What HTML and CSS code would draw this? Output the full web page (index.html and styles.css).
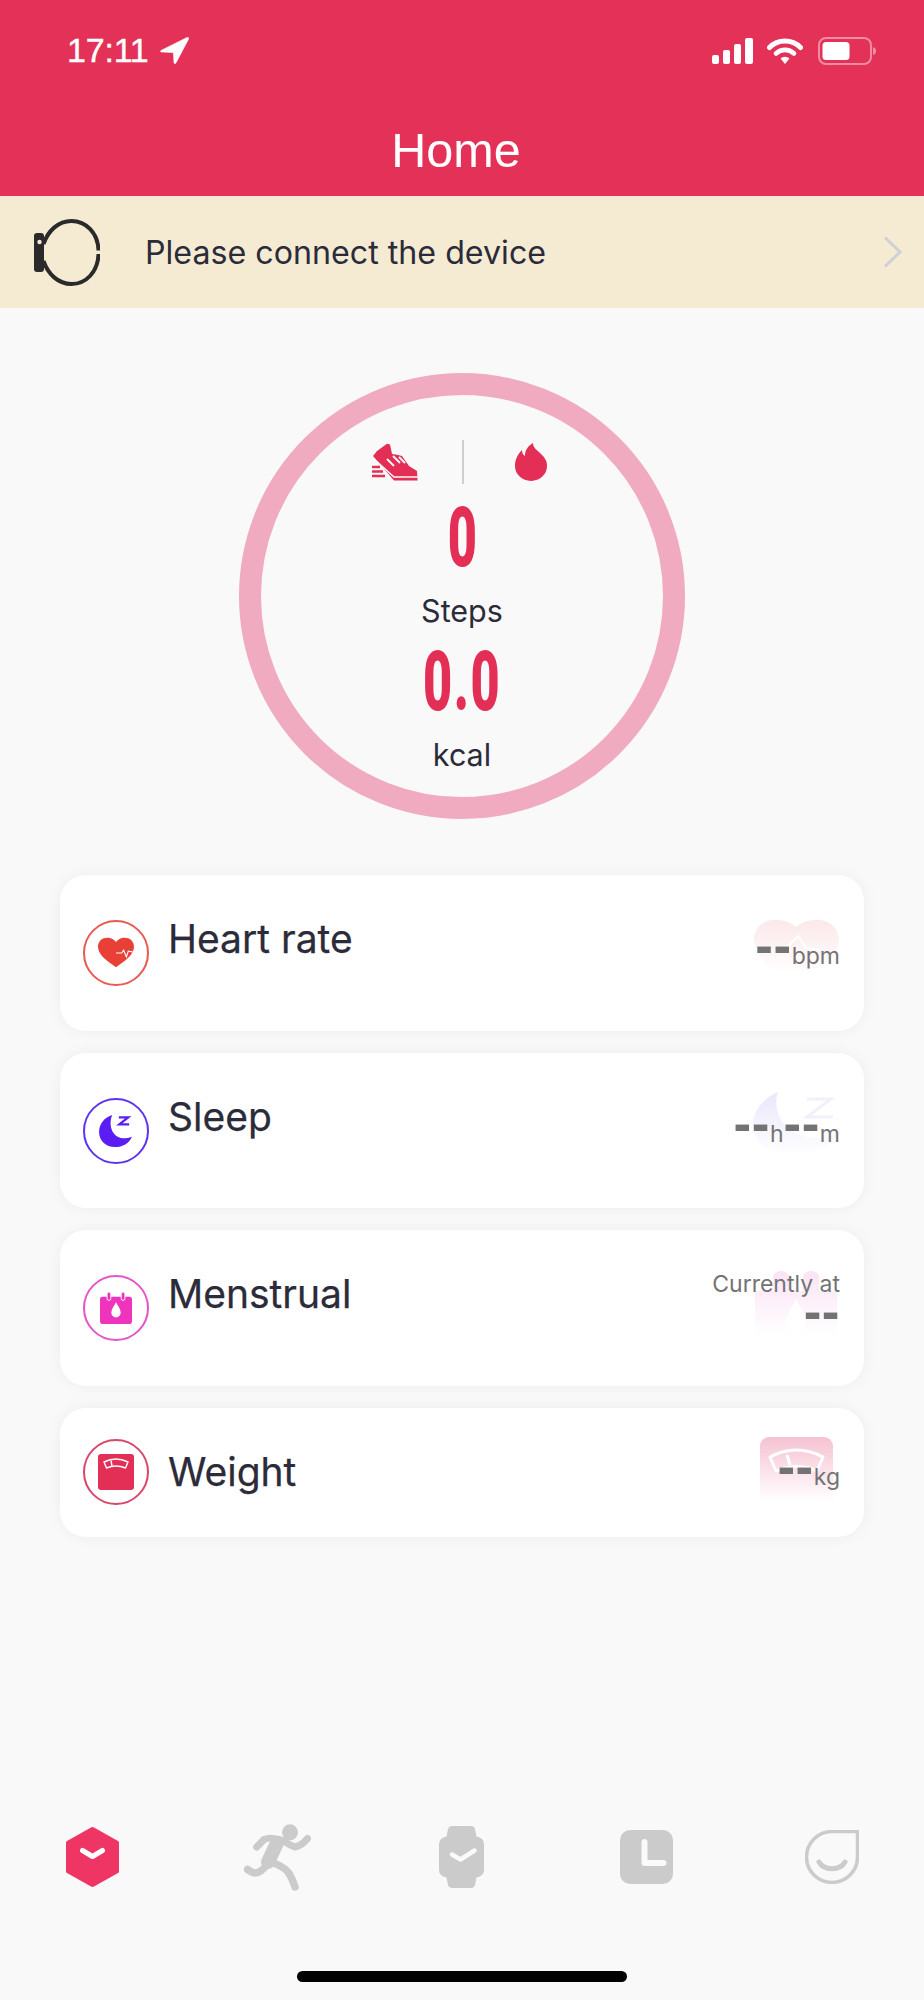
FILE: index.html
```html
<!DOCTYPE html>
<html lang="en">

<head>
    <meta charset="UTF-8">
    <meta name="viewport" content="width=device-width, initial-scale=1.0">
    <title>Home</title>
    <link rel="stylesheet" href="styles.css">
</head>

<body>
    <div class="app">
        <header class="top">
            <div class="status">
                <div class="status-left">
                    <span class="clock">17:11</span>
                    <svg class="ico-arrow" viewBox="0 0 29 27"><path d="M27 .5 1 13.500q-1.500 1 .3 1.500l12 .5 .7 10.500q.8 1.500 1.800.2L28.600 2q.3-2-1.600-1.500z" fill="#fff" stroke="#fff" stroke-width=".6" stroke-linejoin="round"/></svg>
                </div>
                <div class="status-right">
                    <svg class="ico-signal" viewBox="0 0 41 26">
                        <rect x="0" y="17" width="7" height="9" rx="2" fill="#fff"/>
                        <rect x="11" y="12" width="7" height="14" rx="2" fill="#fff"/>
                        <rect x="22" y="6" width="7" height="20" rx="2" fill="#fff"/>
                        <rect x="33" y="0" width="8" height="26" rx="2" fill="#fff"/>
                    </svg>
                    <svg class="ico-wifi" viewBox="0 0 36 26">
                        <path d="M2.500 9.500a22 22 0 0 1 31 0" fill="none" stroke="#fff" stroke-width="5" stroke-linecap="round"/>
                        <path d="M9 15.500a13 13 0 0 1 18 0" fill="none" stroke="#fff" stroke-width="4.600" stroke-linecap="round"/>
                        <path d="M13.500 20.500 18 26l4.500-5.500a6.500 6.500 0 0 0-9 0z" fill="#fff"/>
                    </svg>
                    <svg class="ico-battery" viewBox="0 0 58 28">
                        <rect x="1" y="1" width="52" height="26" rx="7" fill="none" stroke="#fff" stroke-opacity=".45" stroke-width="2"/>
                        <rect x="4.500" y="5" width="27" height="18" rx="3.500" fill="#fff"/>
                        <path d="M55 10q3 1 3 4t-3 4z" fill="#fff" fill-opacity=".45"/>
                    </svg>
                </div>
            </div>
            <h1 class="top-title">Home</h1>
        </header>

        <div class="connect">
            <svg class="ico-band" viewBox="0 0 66 67">
                <path d="M64.500 31.500C64 14 52 2 37.500 2 24 2 14 12 9.500 25" fill="none" stroke="#2b2a2a" stroke-width="4"/>
                <path d="M64.500 35C64 53 52 65 37.500 65 24 65 14 55 9.500 42" fill="none" stroke="#2b2a2a" stroke-width="4"/>
                <rect x="0" y="14" width="10" height="39" rx="3" fill="#2b2a2a"/>
                <circle cx="5.500" cy="23" r="2.200" fill="#f5ebd3"/>
            </svg>
            <span class="connect-text">Please connect the device</span>
            <svg class="ico-chevron" viewBox="0 0 19 32"><path d="M2 1.500 17 16 2 30.500" fill="none" stroke="#cfd1d6" stroke-width="3"/></svg>
        </div>

        <section class="ring-wrap">
            <div class="ring">
                <div class="ring-icons">
                    <div class="ring-cell">
                        <svg class="ico-shoe" viewBox="0 0 46 38">
                            <path d="M15 .700 18 1.500 20 11q5 .5 10 2l7 10 8 5 .6 9.500H22L1 13l4-5z" fill="#e32e55"/>
                            <path d="M15 16l7 7M21 13l7 7M27 14l6 6" fill="none" stroke="#fafafa" stroke-width="1.800"/>
                            <path d="M2 16l20 18h24" fill="none" stroke="#fafafa" stroke-width="1.400"/>
                            <path d="M0 24h8M0 28.500h11M0 33h13" fill="none" stroke="#e32e55" stroke-width="2.600"/>
                        </svg>
                    </div>
                    <div class="ring-cell ring-cell-line">
                        <svg class="ico-flame" viewBox="0 0 32 38"><path d="M18 0c0 5 4 7 8 11 4 4 6 7 6 12a16 15 0 0 1-32 0C0 16 3 11 7 7c0 3 1 5 3 6 0-6 3-10 8-13z" fill="#e32e55"/></svg>
                    </div>
                </div>
                <div class="big-num big-num-steps"><span>0</span></div>
                <div class="ring-label">Steps</div>
                <div class="big-num big-num-kcal"><span>0.0</span></div>
                <div class="ring-label ring-label-kcal">kcal</div>
            </div>
        </section>

        <section class="cards">
            <div class="card card-heart">
                <svg class="card-art art-heart" viewBox="0 0 85 54">
                    <defs>
                        <linearGradient id="fadeHeart" x1="0" y1="0" x2="0" y2="1">
                            <stop offset="0" stop-color="#fce8ea"/>
                            <stop offset="1" stop-color="#fff"/>
                        </linearGradient>
                    </defs>
                    <path d="M42 7C36 1 28 0 20 0 8 0 0 9 0 20c0 14 12 24 22 34h40c10-10 23-20 23-34C85 9 76 0 64 0 56 0 48 1 42 7z" fill="url(#fadeHeart)"/>
                    <path d="M30 30l14-14 8 12 14 2" fill="none" stroke="#fff" stroke-width="2"/>
                </svg>
                <div class="card-badge badge-heart">
                    <svg class="badge-ico" viewBox="0 0 38 32">
                        <path d="M19 31C12 26 0 19 0 9.500 0 3.500 4.500 0 10 0c4 0 7 2 9 4.500C21 2 24 0 28 0c5.500 0 10 3.500 10 9.500C38 19 26 26 19 31z" fill="#e83f36"/>
                        <path d="M19 16h6l2-3 3 7 2-6 5 1" fill="none" stroke="#fff" stroke-width="1.200"/>
                    </svg>
                </div>
                <div class="card-title">Heart rate</div>
                <div class="card-value"><span class="dash">--</span><span class="unit">bpm</span></div>
            </div>

            <div class="card card-sleep">
                <svg class="card-art art-moon" viewBox="0 0 87 64">
                    <defs>
                        <linearGradient id="fadeMoon" x1="0" y1="0" x2="0" y2="1">
                            <stop offset="0" stop-color="#e9e7fb"/>
                            <stop offset="1" stop-color="#fff"/>
                        </linearGradient>
                    </defs>
                    <path d="M25 0C10 6 0 19 0 33c0 18 18 31 40 31 20 0 36-8 47-24-14 8-34 8-47 0C26 31 20 14 25 0z" fill="url(#fadeMoon)"/>
                    <path d="M54 7h24L54 25h26" fill="none" stroke="#f1f0fb" stroke-width="3"/>
                </svg>
                <div class="card-badge badge-sleep">
                    <svg class="badge-ico" viewBox="0 0 36 34">
                        <path d="M14 0C5 3 0 10 0 18c0 9 7 16 17 16 8 0 15-4 18-11-9 3-15 2-19-3C12 15 11 7 14 0z" fill="#5a1ef5"/>
                        <path d="M21 2.500h10L21.500 10H32" fill="none" stroke="#5a1ef5" stroke-width="2.400"/>
                    </svg>
                </div>
                <div class="card-title">Sleep</div>
                <div class="card-value"><span class="dash">--</span><span class="unit">h</span><span class="dash">--</span><span class="unit">m</span></div>
            </div>

            <div class="card card-cycle">
                <svg class="card-art art-cal" viewBox="0 0 82 64">
                    <defs>
                        <linearGradient id="fadeCal" x1="0" y1="0" x2="0" y2="1">
                            <stop offset="0" stop-color="#fae3f5"/>
                            <stop offset="1" stop-color="#fff"/>
                        </linearGradient>
                    </defs>
                    <path d="M0 20h18V6a8 6 0 0 1 16 0v14h14V6a8 6 0 0 1 16 0v14h18v44H0z" fill="url(#fadeCal)"/>
                    <path d="M41 28 30 50a11 11 0 0 0 22 0z" fill="#fff"/>
                </svg>
                <div class="card-badge badge-cycle">
                    <svg class="badge-ico" viewBox="0 0 34 34">
                        <path d="M3 5h5V2h3v3h12V2h3v3h5a3 3 0 0 1 3 3v23a3 3 0 0 1-3 3H3a3 3 0 0 1-3-3V8a3 3 0 0 1 3-3z" fill="#ee33bd"/>
                        <path d="M9.500 0a2 2 0 0 1 2 2v5a2 2 0 0 1-4 0V2a2 2 0 0 1 2-2zM24.500 0a2 2 0 0 1 2 2v5a2 2 0 0 1-4 0V2a2 2 0 0 1 2-2z" fill="#ee33bd" stroke="#fff" stroke-width="1"/>
                        <path d="M17 11c-2 4-5 7-5 11a5 5 0 0 0 10 0c0-4-3-7-5-11z" fill="#fff"/>
                    </svg>
                </div>
                <div class="card-title">Menstrual</div>
                <div class="card-value card-value-stack">
                    <span class="unit">Currently at</span>
                    <span class="dash">--</span>
                </div>
            </div>

            <div class="card card-weight">
                <svg class="card-art art-scale" viewBox="0 0 73 64">
                    <defs>
                        <linearGradient id="fadeScale" x1="0" y1="0" x2="0" y2="1">
                            <stop offset="0" stop-color="#f6c2d2"/>
                            <stop offset="1" stop-color="#fff"/>
                        </linearGradient>
                    </defs>
                    <path d="M9 0h55a9 9 0 0 1 9 9v55H0V9a9 9 0 0 1 9-9z" fill="url(#fadeScale)"/>
                    <path d="M10 20q26-14 53 0l-6 14q-19-9-41 0z" fill="none" stroke="#fff" stroke-width="3" stroke-linejoin="round"/>
                    <path d="M27 18l3 10" fill="none" stroke="#fff" stroke-width="3"/>
                </svg>
                <div class="card-badge badge-weight">
                    <svg class="badge-ico badge-ico-scale" viewBox="0 0 36 36">
                        <rect width="36" height="36" rx="3" fill="#e32e55"/>
                        <path d="M6 8q12-6 24 0l-2.500 6q-9.500-4-19 0z" fill="none" stroke="#fff" stroke-width="1.400" stroke-linejoin="round"/>
                        <path d="M13 6.500l1 5.500" fill="none" stroke="#fff" stroke-width="1.400"/>
                    </svg>
                </div>
                <div class="card-title">Weight</div>
                <div class="card-value"><span class="dash">--</span><span class="unit">kg</span></div>
            </div>
        </section>

        <nav class="tabs">
            <div class="tab">
                <svg class="ico-hex" viewBox="0 0 53 60">
                    <path d="M25 .5q1.500-.8 3 0l24 13.500q1 .5 1 1.500v29q0 1-1 1.500L28 59.500q-1.500.8-3 0L1 46q-1-.5-1-1.500v-29q0-1 1-1.500z" fill="#ee3564"/>
                    <path d="M16.500 23.500l10 6 10-6" fill="none" stroke="#fff" stroke-width="5" stroke-linecap="round" stroke-linejoin="round"/>
                </svg>
            </div>
            <div class="tab">
                <svg class="ico-run" viewBox="0 0 67 67">
                    <circle cx="46" cy="8.300" r="8" fill="#cbcbcb"/>
                    <path d="M12.700 23 20 15.500c6-3 13-1 19 1 3 1.500 6 5 12 6.500 5-1 9-4 12.500-8.500" fill="none" stroke="#cbcbcb" stroke-width="7" stroke-linecap="round" stroke-linejoin="round"/>
                    <path d="M33 19 24 38" fill="none" stroke="#cbcbcb" stroke-width="14" stroke-linecap="round"/>
                    <path d="M24 39c-4 6-8 10-13 10-3 0-5-2-7.500-3.500" fill="none" stroke="#cbcbcb" stroke-width="7.500" stroke-linecap="round" stroke-linejoin="round"/>
                    <path d="M26 38c7 2 14 5 18 10 3 4 5 9 7 15" fill="none" stroke="#cbcbcb" stroke-width="7.500" stroke-linecap="round" stroke-linejoin="round"/>
                </svg>
            </div>
            <div class="tab">
                <svg class="ico-watch" viewBox="0 0 45 62">
                    <path d="M13 0h19q3 0 4 3l1.500 7.500Q45 12 45 18v26q0 6-7.500 7.500L36 59q-1 3-4 3H13q-3 0-4-3L7.500 51.500Q0 50 0 44V18q0-6 7.500-7.500L9 3q1-3 4-3z" fill="#cbcbcb"/>
                    <path d="M13 28.500l8.500 5 14-9" fill="none" stroke="#fafafa" stroke-width="4.500" stroke-linecap="round" stroke-linejoin="round"/>
                </svg>
            </div>
            <div class="tab">
                <svg class="ico-clock" viewBox="0 0 53 54">
                    <rect width="53" height="54" rx="10" fill="#cbcbcb"/>
                    <path d="M24.500 12v21h19" fill="none" stroke="#fafafa" stroke-width="6" stroke-linecap="round" stroke-linejoin="round"/>
                </svg>
            </div>
            <div class="tab">
                <svg class="ico-drop" viewBox="0 0 54 54">
                    <path d="M52.500 1.500V27A25.500 25.500 0 1 1 27 1.500z" fill="none" stroke="#cbcbcb" stroke-width="3.500"/>
                    <path d="M14 32c5 9 21 9 26 0" fill="none" stroke="#cbcbcb" stroke-width="5" stroke-linecap="round"/>
                </svg>
            </div>
        </nav>
        <div class="home-bar"></div>
    </div>
</body>

</html>
```

FILE: styles.css
```css
* {
    box-sizing: border-box;
}

body {
    margin: 0;
    font-family: Inter, "Liberation Sans", sans-serif;
    color: #2b2b3a;
    background-color: #f9f9f9;
}

svg {
    display: block;
    flex: none;
}

.app {
    display: flex;
    flex-direction: column;
    height: 2000px;
    overflow: hidden;
}

/* red header */
.top {
    height: 196px;
    padding-top: 36px;
    color: #fff;
    background-color: #e33157;
}

.status {
    display: flex;
    align-items: center;
    justify-content: space-between;
    height: 29px;
    padding: 0 48px 0 67px;
}

.status-left,
.status-right {
    display: flex;
    align-items: center;
}

.clock {
    font-family: "Liberation Sans", sans-serif;
    font-size: 34px;
    letter-spacing: -.2px;
    -webkit-text-stroke: .4px #fff;
}

.ico-arrow {
    width: 29px;
    height: 27px;
    margin-left: 11px;
}

.ico-signal {
    width: 41px;
    height: 26px;
}

.ico-wifi {
    width: 36px;
    height: 26px;
    margin-left: 14px;
}

.ico-battery {
    width: 58px;
    height: 28px;
    margin-left: 15px;
}

.top-title {
    margin: 57px 0 0;
    padding-right: 12px;
    font-family: "Liberation Sans", sans-serif;
    font-size: 48.5px;
    font-weight: 400;
    line-height: 56px;
    text-align: center;
}

/* connect banner */
.connect {
    display: flex;
    align-items: center;
    height: 112px;
    padding: 0 22px 0 34px;
    background-color: #f5ebd3;
}

.ico-band {
    width: 66px;
    height: 67px;
}

.connect-text {
    margin-left: 45px;
    font-size: 32.2px;
}

.ico-chevron {
    width: 19px;
    height: 32px;
    margin-left: auto;
}

/* step ring */
.ring-wrap {
    display: flex;
    justify-content: center;
    padding-top: 65px;
}

.ring {
    display: flex;
    flex-direction: column;
    align-items: center;
    width: 446px;
    height: 446px;
    padding-top: 45px;
    border: 22px solid #f0abc1;
    border-radius: 50%;
}

.ring-icons {
    display: flex;
    height: 44px;
}

.ring-cell {
    display: flex;
    align-items: center;
    justify-content: center;
    width: 135px;
}

.ring-cell-line {
    border-left: 2px solid #cfcfcf;
}

.ico-shoe {
    width: 46px;
    height: 38px;
}

.ico-flame {
    width: 32px;
    height: 38px;
}

.big-num {
    height: 61px;
    font-family: Roboto, sans-serif;
    font-size: 84px;
    font-weight: 900;
    line-height: 61px;
    color: #e32e55;
}

.big-num span {
    display: inline-block;
    transform: scaleX(.6);
}

.big-num-steps {
    margin-top: 23px;
}

.big-num-kcal {
    margin-top: 23px;
    letter-spacing: 2.500px;
}

.ring-label {
    height: 34px;
    margin-top: 26px;
    font-size: 30.5px;
    line-height: 34px;
}

.ring-label-kcal {
    margin-top: 26px;
}

/* cards */
.cards {
    display: flex;
    flex-direction: column;
    gap: 22px;
    padding: 56px 60px 0;
}

.card {
    position: relative;
    display: flex;
    align-items: flex-start;
    height: 155.67px;
    padding: 45px 24px 0 23px;
    background-color: #fff;
    border-radius: 26px;
    box-shadow: 0 0 16px rgba(0, 0, 0, .05);
}

.card-weight {
    align-items: center;
    height: 129px;
    padding-top: 0;
}

.card-art {
    position: absolute;
}

.art-heart {
    top: 45px;
    right: 25px;
    width: 85px;
    height: 54px;
}

.art-moon {
    top: 39px;
    right: 24px;
    width: 87px;
    height: 64px;
}

.art-cal {
    top: 41px;
    right: 27px;
    width: 82px;
    height: 64px;
}

.art-scale {
    top: 29px;
    right: 31px;
    width: 73px;
    height: 64px;
}

.card-badge {
    display: flex;
    align-items: center;
    justify-content: center;
    width: 66px;
    height: 66px;
    border: 2px solid;
    border-radius: 50%;
}

.badge-heart {
    border-color: #e85a52;
}

.badge-sleep {
    border-color: #5f34ee;
}

.badge-cycle {
    border-color: #e456c6;
}

.badge-weight {
    border-color: #d9476b;
}

.badge-ico {
    width: 36px;
    height: 32px;
}

.badge-ico-scale {
    height: 36px;
}

.card-title {
    position: relative;
    margin-top: -4px;
    margin-left: 19px;
    font-size: 39px;
    line-height: 46px;
    -webkit-text-stroke: .25px #2b2b3a;
}

.card-weight .card-title {
    margin-top: 0;
}

.card-value {
    position: relative;
    display: flex;
    align-items: baseline;
    margin-left: auto;
    padding-top: 3px;
    color: #737373;
}

.card-weight .card-value {
    margin-top: -10px;
    padding-top: 0;
}

.card-value-stack {
    flex-direction: column;
    align-items: flex-end;
    margin-top: -8px;
}

.dash {
    font-family: "Liberation Sans", sans-serif;
    font-size: 53px;
    font-weight: 700;
    line-height: 46px;
    letter-spacing: .5px;
}

.card-value-stack .dash {
    margin-top: 4px;
    line-height: 20px;
}

.unit {
    font-size: 23px;
    line-height: 28px;
}

/* bottom tabs */
.tabs {
    display: grid;
    grid-template-columns: repeat(5, 1fr);
    align-items: center;
    height: 70px;
    margin-top: auto;
}

.tab {
    display: flex;
    justify-content: center;
}

.ico-hex {
    width: 53px;
    height: 60px;
}

.ico-run {
    width: 67px;
    height: 67px;
}

.ico-watch {
    width: 45px;
    height: 62px;
}

.ico-clock {
    width: 53px;
    height: 54px;
}

.ico-drop {
    width: 54px;
    height: 54px;
}

.home-bar {
    align-self: center;
    width: 330px;
    height: 11px;
    margin-top: 79px;
    margin-bottom: 18px;
    background-color: #000;
    border-radius: 6px;
}
```
